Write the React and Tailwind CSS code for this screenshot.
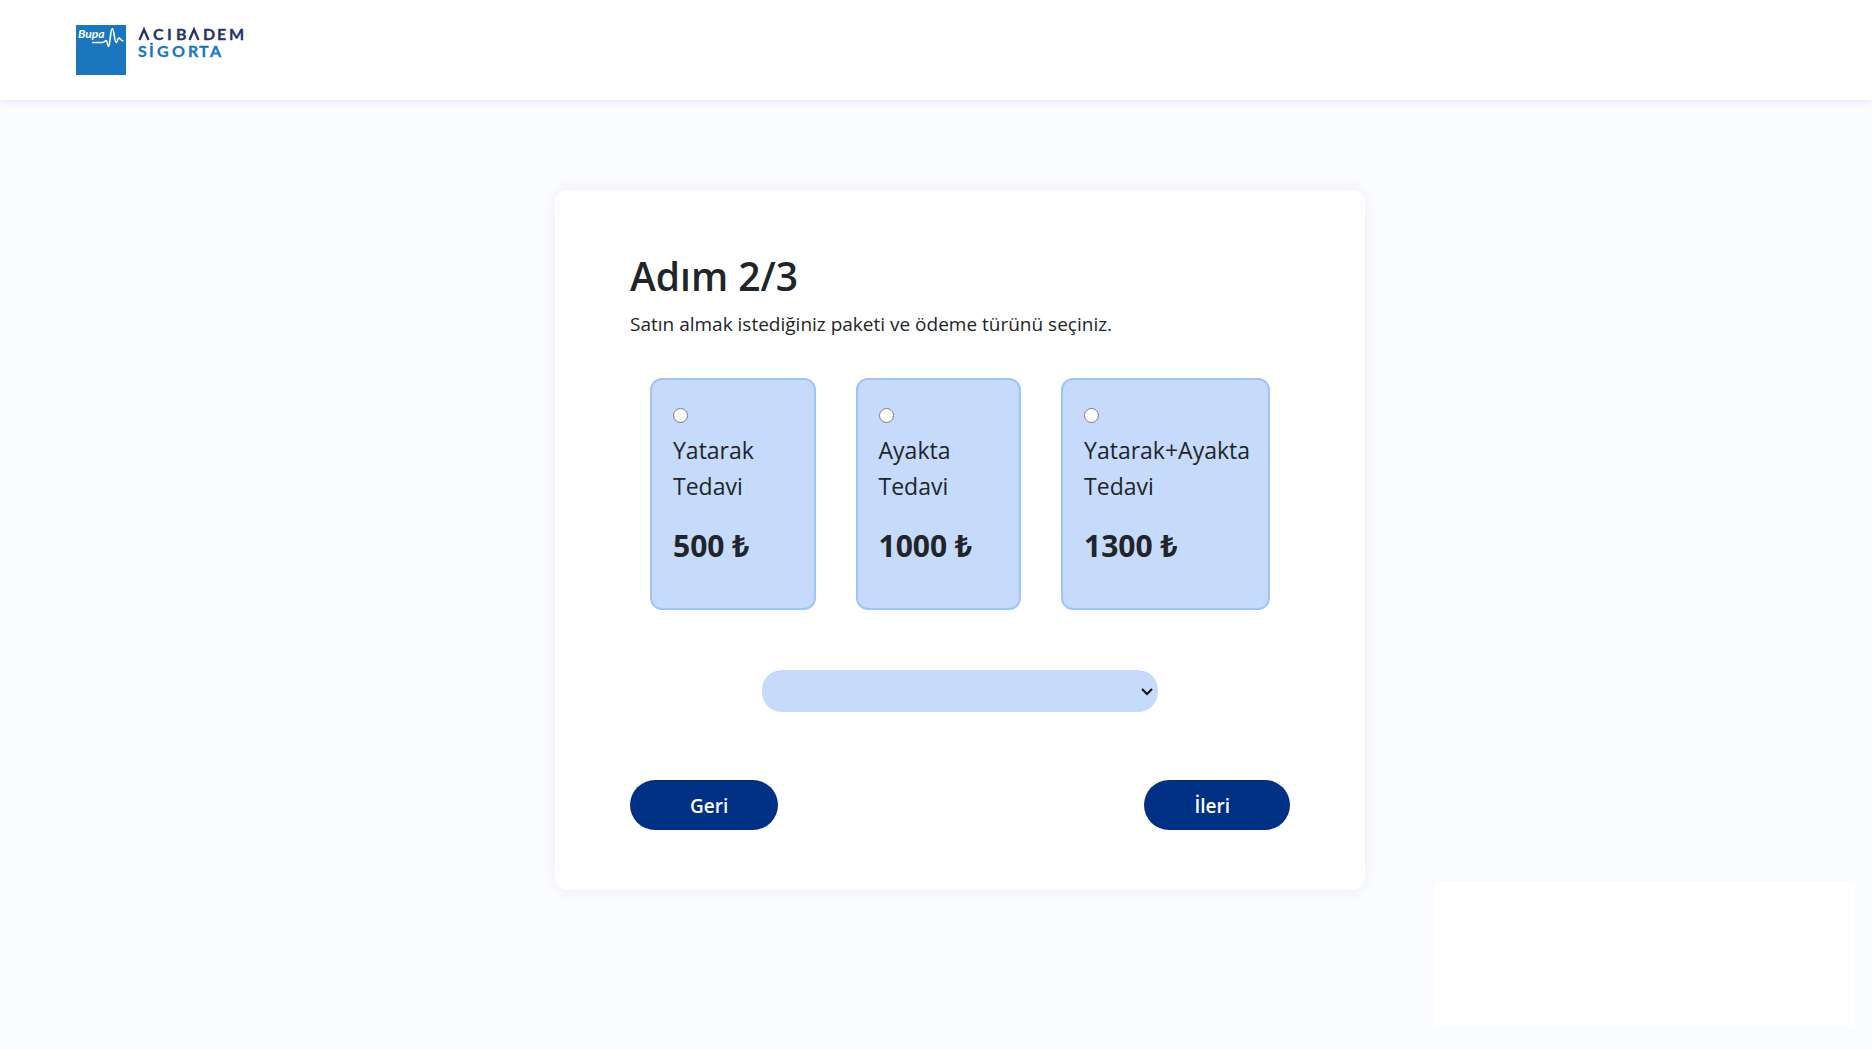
import { useState } from "react";

const packages = [
  { id: "yatarak", name: "Yatarak", price: "500 ₺" },
  { id: "ayakta", name: "Ayakta", price: "1000 ₺" },
  { id: "ikisi", name: "Yatarak+Ayakta", price: "1300 ₺" },
];

function Logo() {
  return (
    <a href="#" aria-label="Bupa Acıbadem Sigorta" className="block">
      <svg width="170" height="50" viewBox="0 0 170 50">
        <rect width="50" height="50" fill="#1a77be" />
        <text x="2" y="13" fontFamily="Lato, sans-serif" fontSize="12" fontWeight="700" fontStyle="italic" fill="#fff">
          Bupa
        </text>
        <path
          d="M16 17.500H26.500C28.500 17.500 29 15.500 30 15.500C31.500 15.500 31.500 21.500 32.500 21.500C34 21.500 34.500 3.500 36.300 3.500C38 3.500 38.500 17.500 40.200 17.500C41.500 17.500 41.500 13 43 13C44.500 13 44.500 16 47.500 16"
          fill="none"
          stroke="#fff"
          strokeWidth="1.600"
        />
        <g fill="none" stroke="#26346b" strokeWidth="2.300">
          <path d="M63.500 15L68 4.500L72.500 15" />
          <path d="M113.500 15L118 4.500L122.500 15" />
        </g>
        <g fontFamily="Lato, sans-serif" fontWeight="700" fontSize="16" strokeWidth="0.300">
          <g fill="#26346b" stroke="#26346b">
            <text x="77" y="15">C</text>
            <text x="91" y="15">I</text>
            <text x="100" y="15">B</text>
            <text x="127" y="15">D</text>
            <text x="141" y="15">E</text>
            <text x="153" y="15">M</text>
          </g>
          <g fill="#1a77be" stroke="#1a77be">
            <text x="62" y="32">S</text>
            <text x="73" y="32">İ</text>
            <text x="81" y="32">G</text>
            <text x="96" y="32">O</text>
            <text x="112" y="32">R</text>
            <text x="123" y="32">T</text>
            <text x="134" y="32">A</text>
          </g>
        </g>
      </svg>
    </a>
  );
}

export default function App() {
  const [selected, setSelected] = useState("");
  return (
    <div className="min-h-screen bg-[#fbfcff] font-['Open_Sans','Noto_Sans',sans-serif] text-[#212529]">
      <header className="flex h-[100px] items-center bg-white px-[76px] shadow-[0_0_10px_#dcdcf2]">
        <Logo />
      </header>

      <main className="pt-[90px] pr-6 pb-10 pl-[72px]">
        <form
          onSubmit={(e) => e.preventDefault()}
          className="mx-auto w-full max-w-[810px] rounded-xl bg-white px-[75px] pt-[62px] pb-[60px] shadow-[0_0_15px_#ebebf9]"
        >
          <h1 className="text-[39px] leading-[48px] font-semibold">Adım 2/3</h1>
          <p className="mt-[9px] text-[19px] leading-[30px]">Satın almak istediğiniz paketi ve ödeme türünü seçiniz.</p>

          <div role="radiogroup" aria-label="Paket" className="mt-[39px] flex gap-10 px-5">
            {packages.map((p) => (
              <label
                key={p.id}
                className="flex h-[232px] flex-1 flex-col rounded-xl border-2 border-[#9fc3fb] bg-[#c6dbfc] pt-7 pr-[18px] pl-[21px]"
              >
                <input
                  type="radio"
                  name="paket"
                  value={p.id}
                  checked={selected === p.id}
                  onChange={() => setSelected(p.id)}
                  className="size-[15px]"
                />
                <span className="mt-[9px] block text-[23px] leading-9">
                  {p.name}
                  <br />
                  Tedavi
                </span>
                <strong className="mt-6 block text-[30px] leading-9 font-bold whitespace-nowrap">{p.price}</strong>
              </label>
            ))}
          </div>

          <div className="relative mx-auto mt-[60px] h-[42px] w-3/5">
            <select aria-label="Ödeme türü" className="size-full appearance-none rounded-[20px] bg-[#c6dbfc] px-4 text-[19px]">
              <option value=""></option>
              <option value="pesin">Peşin</option>
              <option value="taksit">Taksit</option>
            </select>
            <svg className="pointer-events-none absolute top-[18px] right-[5px]" width="12" height="8" viewBox="0 0 12 8">
              <path d="M1 1L6 6L11 1" fill="none" stroke="#111" strokeWidth="2" />
            </svg>
          </div>

          <div className="mt-[68px] flex justify-between">
            <button type="button" className="h-[50px] rounded-[25px] bg-[#003083] pt-[2px] pr-[50px] pl-[60px] text-[19px] font-semibold text-white">
              Geri
            </button>
            <button type="submit" className="h-[50px] rounded-[25px] bg-[#003083] pt-[2px] pr-[60px] pl-[50px] text-[19px] font-semibold text-white">
              İleri
            </button>
          </div>
        </form>
      </main>

      <aside className="fixed right-[17px] bottom-[23px] h-36 w-[421px] bg-white" />
    </div>
  );
}
